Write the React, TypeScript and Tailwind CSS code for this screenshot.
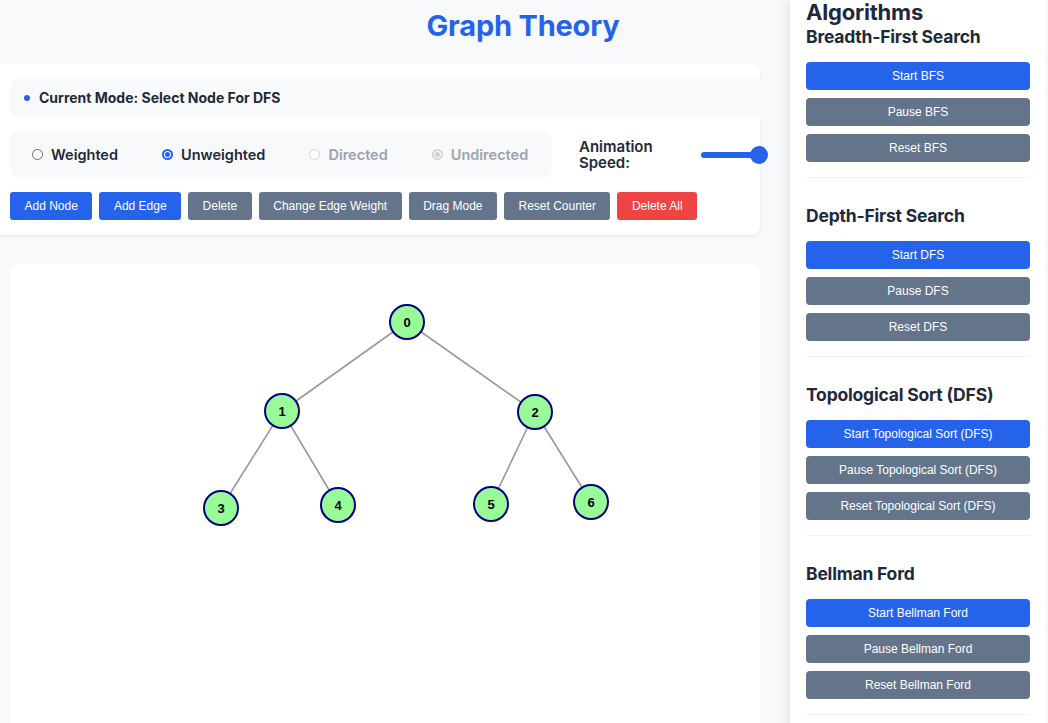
import React from 'react';

type Node = { id: number; x: number; y: number };

const nodes: Node[] = [
    { id: 0, x: 397, y: 58 },
    { id: 1, x: 272, y: 147 },
    { id: 2, x: 525, y: 148 },
    { id: 3, x: 211, y: 244 },
    { id: 4, x: 328, y: 241 },
    { id: 5, x: 481, y: 240 },
    { id: 6, x: 581, y: 238 },
];

const edges: [number, number][] = [
    [0, 1],
    [0, 2],
    [1, 3],
    [1, 4],
    [2, 5],
    [2, 6],
];

const sections = [
    { title: 'Breadth-First Search', name: 'BFS' },
    { title: 'Depth-First Search', name: 'DFS' },
    { title: 'Topological Sort (DFS)', name: 'Topological Sort (DFS)' },
    { title: 'Bellman Ford', name: 'Bellman Ford' },
];

const toolButtons = [
    { label: 'Add Node', color: 'bg-[#2563eb]' },
    { label: 'Add Edge', color: 'bg-[#2563eb]' },
    { label: 'Delete', color: 'bg-[#64748b]' },
    { label: 'Change Edge Weight', color: 'bg-[#64748b]' },
    { label: 'Drag Mode', color: 'bg-[#64748b]' },
    { label: 'Reset Counter', color: 'bg-[#64748b]' },
    { label: 'Delete All', color: 'bg-[#ef4444]' },
];

function Radio({ label, checked, disabled }: { label: string; checked?: boolean; disabled?: boolean }) {
    let circle = 'border border-[#6b6b6b] bg-white';
    if (checked && !disabled) circle = 'border-[2px] border-[#2563eb] bg-white';
    if (disabled && !checked) circle = 'border border-[#d4d4d4] bg-white';
    if (disabled && checked) circle = 'border-[2px] border-[#d6d6d6] bg-white';

    return (
        <label className="flex shrink-0 items-center gap-[8px]">
            <span className={`flex h-[11px] w-[11px] items-center justify-center rounded-full ${circle}`}>
                {checked && (
                    <span className={`h-[5px] w-[5px] rounded-full ${disabled ? 'bg-[#cfcfcf]' : 'bg-[#2563eb]'}`}></span>
                )}
            </span>
            <span className={`text-[14.5px] font-semibold ${disabled ? 'text-[#9ca3af]' : 'text-[#1f2937]'}`}>{label}</span>
        </label>
    );
}

export default function App() {
    return (
        <div
            className="grid min-h-[723px] grid-cols-[1fr_256px] grid-rows-[64px_1fr] overflow-hidden bg-[#f8f9fb] pr-[2px]"
            style={{ fontFamily: 'Inter, "Noto Sans", sans-serif' }}
        >
            {/* タイトル */}
            <h1 className="col-span-2 col-start-1 row-start-1 pt-[8px] text-center text-[29px] font-bold leading-[36px] tracking-[-0.2px] text-[#2563eb]">
                Graph Theory
            </h1>

            {/* メインエリア */}
            <main className="col-start-1 row-start-2 w-[760px] pl-[10px]">
                <div className="-ml-[16px] rounded-lg bg-white px-4 pb-[15px] pt-[15px] shadow-[0_1px_3px_rgba(0,0,0,0.08)]">
                    <div className="-mr-[36px] flex h-[37px] items-center gap-[9px] rounded-lg bg-[#f8f9fb] pl-[14px]">
                        <span className="h-[6px] w-[6px] rounded-full bg-[#2563eb]"></span>
                        <span className="text-[14px] font-bold text-[#1f2937]">Current Mode: Select Node For DFS</span>
                    </div>

                    <div className="mt-[16px] flex items-center">
                        <div className="flex h-[45px] w-[542px] shrink-0 items-center gap-[44px] rounded-lg bg-[#f8f9fb] pl-[22px]">
                            <Radio label="Weighted" />
                            <Radio label="Unweighted" checked />
                            <Radio label="Directed" disabled />
                            <Radio label="Undirected" checked disabled />
                        </div>
                        <div className="ml-[27px] w-[90px] shrink-0 text-[15px] font-semibold leading-[16px] text-[#1f2937]">
                            Animation Speed:
                        </div>
                        <div className="relative ml-[32px] flex h-[20px] w-[58px] shrink-0 items-center">
                            <div className="h-[6px] w-full rounded-full bg-[#2563eb]"></div>
                            <div className="absolute -right-[9px] top-[1px] h-[18px] w-[18px] rounded-full bg-[#2563eb]"></div>
                        </div>
                    </div>

                    <div className="mt-[15px] flex gap-[7px]" style={{ fontFamily: '"Liberation Sans", Arial, sans-serif' }}>
                        {toolButtons.map(b => (
                            <button
                                key={b.label}
                                className={`h-[28px] shrink-0 rounded-[3px] px-[14.5px] text-[12px] text-white ${b.color}`}
                            >
                                {b.label}
                            </button>
                        ))}
                    </div>
                </div>

                {/* グラフ描画エリア */}
                <div className="mt-[29px] h-[500px] rounded-lg bg-white shadow-[0_1px_2px_rgba(0,0,0,0.06)]">
                    <svg width="750" height="460" viewBox="0 0 750 460">
                        {edges.map(([a, b]) => (
                            <line
                                key={`${a}-${b}`}
                                x1={nodes[a].x}
                                y1={nodes[a].y}
                                x2={nodes[b].x}
                                y2={nodes[b].y}
                                stroke="#999999"
                                strokeWidth="1.6"
                            />
                        ))}
                        {nodes.map(n => (
                            <g key={n.id}>
                                <circle cx={n.x} cy={n.y} r="17" fill="#98fb98" stroke="#000080" strokeWidth="2" />
                                <text
                                    x={n.x}
                                    y={n.y + 4.5}
                                    textAnchor="middle"
                                    fontSize="13"
                                    fontWeight="900"
                                    fontFamily='"Liberation Sans", Arial, sans-serif'
                                    fill="#000000"
                                >
                                    {n.id}
                                </text>
                            </g>
                        ))}
                    </svg>
                </div>
            </main>

            {/* アルゴリズムのサイドバー */}
            <aside className="z-10 col-start-2 row-span-2 row-start-1 bg-white px-4 pt-[2px] shadow-[-4px_0_10px_rgba(0,0,0,0.08)]">
                <h2 className="text-[22px] font-bold leading-[21px] tracking-[-0.2px] text-[#1e293b]">Algorithms</h2>
                {sections.map((s, i) => (
                    <section key={s.name} className={`border-b border-[#f1f3f5] pb-[15px] ${i > 0 ? 'mt-[24px]' : ''}`}>
                        <h3 className="mb-[11px] text-[17.5px] font-bold leading-7 tracking-[-0.2px] text-[#1e293b]">{s.title}</h3>
                        <div className="flex flex-col gap-[8px]" style={{ fontFamily: '"Liberation Sans", Arial, sans-serif' }}>
                            <button className="h-[28px] rounded-[4px] bg-[#2563eb] text-[12px] text-white">Start {s.name}</button>
                            <button className="h-[28px] rounded-[4px] bg-[#64748b] text-[12px] text-white">Pause {s.name}</button>
                            <button className="h-[28px] rounded-[4px] bg-[#64748b] text-[12px] text-white">Reset {s.name}</button>
                        </div>
                    </section>
                ))}
            </aside>
        </div>
    );
}
